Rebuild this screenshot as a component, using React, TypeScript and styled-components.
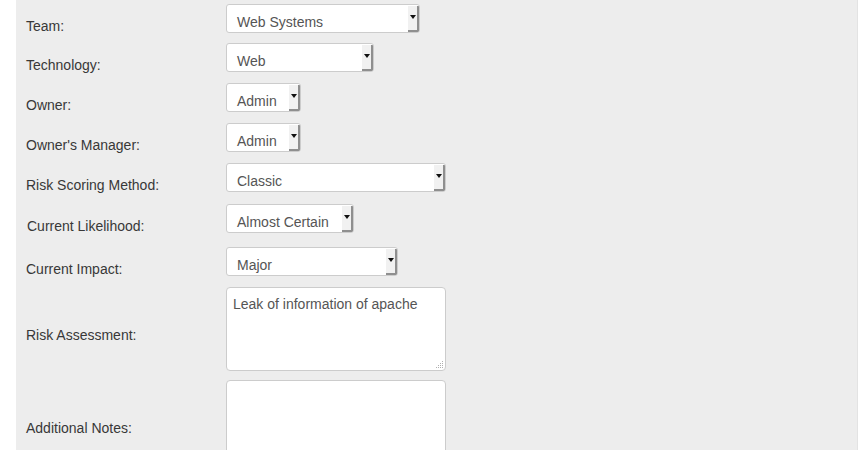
import React from "react";
import styled, { createGlobalStyle } from "styled-components";

const Global = createGlobalStyle`
  html, body { margin: 0; padding: 0; background: #ffffff; }
  body { font-family: "Liberation Sans", Arial, sans-serif; font-size: 14px; }
  * { box-sizing: border-box; }
`;

const Panel = styled.div`
  margin-left: 16px;
  width: 842px;
  height: 450px;
  overflow: hidden;
  background: #ededed;
  border-right: 1px solid #e3e3e3;
  padding: 1.5px 0 0 10px;
`;

const Row = styled.div<{ $gap: number }>`
  display: flex;
  align-items: center;
  margin-top: ${(p) => p.$gap}px;
`;

const Label = styled.label<{ $indent?: number; $drop?: number }>`
  width: 200px;
  flex: none;
  padding-top: ${(p) => p.$drop ?? 14}px;
  padding-left: ${(p) => p.$indent ?? 0}px;
  line-height: 20px;
  font-size: 14px;
  color: #383838;
`;

const Select = styled.div<{ $w: number }>`
  width: ${(p) => p.$w}px;
  height: 29px;
  display: flex;
  align-items: stretch;
  background: #ffffff;
  border: 1px solid #cccccc;
  border-radius: 3px;
  overflow: hidden;
`;

const Value = styled.span`
  flex: 1;
  display: flex;
  align-items: center;
  padding: 7px 0 0 10px;
  font-size: 14px;
  color: #555555;
  white-space: nowrap;
`;

const DropButton = styled.span`
  flex: none;
  width: 11px;
  margin: 1px 0 0 0;
  display: flex;
  align-items: center;
  justify-content: center;
  background: #f1f1f1;
  border-right: 2px solid #8f8f8f;
  border-bottom: 2px solid #8f8f8f;
  &::before {
    content: "";
    width: 0;
    height: 0;
    border-left: 3px solid transparent;
    border-right: 3px solid transparent;
    border-top: 4px solid #111111;
    margin-top: -3px;
  }
`;

const AreaWrap = styled.div`
  position: relative;
  width: 220px;
  height: 84px;
  flex: none;
  &::after {
    content: "";
    position: absolute;
    right: 3px;
    bottom: 3px;
    width: 1px;
    height: 1px;
    background: #b0b0b0;
    box-shadow: -2px 0 #b0b0b0, -4px 0 #b0b0b0, -6px 0 #b0b0b0,
      0 -2px #b0b0b0, -2px -2px #b0b0b0, -4px -2px #b0b0b0,
      0 -4px #b0b0b0, -2px -4px #b0b0b0, 0 -6px #b0b0b0;
    pointer-events: none;
  }
`;

const TextArea = styled.textarea`
  display: block;
  width: 100%;
  height: 100%;
  margin: 0;
  resize: none;
  padding: 6px 6px;
  font-family: "Liberation Sans", Arial, sans-serif;
  font-size: 14px;
  line-height: 20px;
  color: #555555;
  background: #ffffff;
  border: 1px solid #cccccc;
  border-radius: 4px;
  outline: none;
`;

type SelectRow = { label: string; value: string; width: number; gap: number; indent?: number };

const selects: SelectRow[] = [
  { label: "Team:", value: "Web Systems", width: 194, gap: 0 },
  { label: "Technology:", value: "Web", width: 148, gap: 5 },
  { label: "Owner:", value: "Admin", width: 75, gap: 6 },
  { label: "Owner's Manager:", value: "Admin", width: 75, gap: 6 },
  { label: "Risk Scoring Method:", value: "Classic", width: 220, gap: 6 },
  { label: "Current Likelihood:", value: "Almost Certain", width: 128, gap: 7, indent: 1 },
  { label: "Current Impact:", value: "Major", width: 172, gap: 9 },
];

export default function App() {
  return (
    <>
      <Global />
      <Panel>
        {selects.map((s) => (
          <Row key={s.label} $gap={s.gap}>
            <Label $indent={s.indent}>{s.label}</Label>
            <Select $w={s.width}>
              <Value>{s.value}</Value>
              <DropButton />
            </Select>
          </Row>
        ))}
        <Row $gap={8.5}>
          <Label $drop={12}>Risk Assessment:</Label>
          <AreaWrap>
            <TextArea readOnly defaultValue="Leak of information of apache" />
          </AreaWrap>
        </Row>
        <Row $gap={9}>
          <Label $drop={12}>Additional Notes:</Label>
          <AreaWrap>
            <TextArea readOnly defaultValue="" />
          </AreaWrap>
        </Row>
      </Panel>
    </>
  );
}
